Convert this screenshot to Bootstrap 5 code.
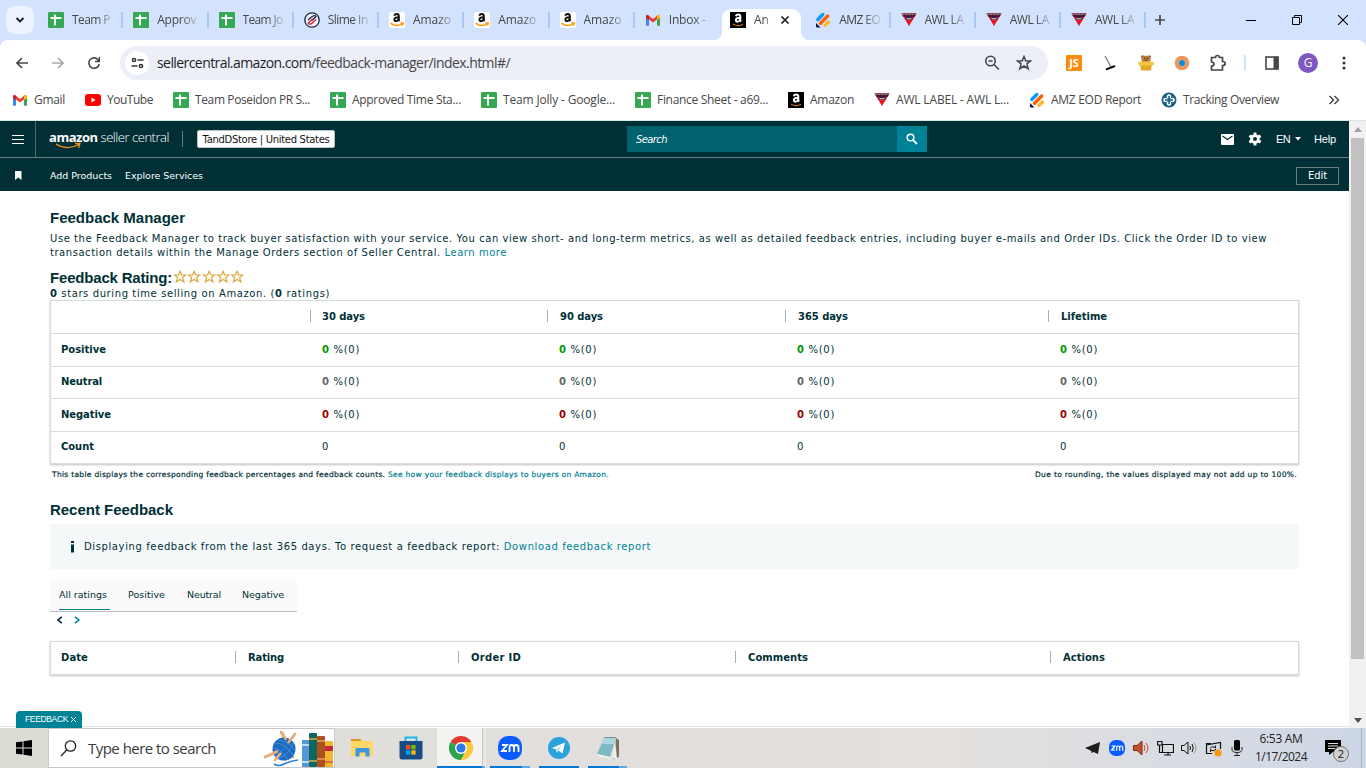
<!DOCTYPE html>
<html lang="en">
<head>
<meta charset="utf-8">
<meta name="viewport" content="width=device-width, initial-scale=1">
<title>Feedback Manager</title>
<link href="https://cdn.jsdelivr.net/npm/bootstrap@5.3.0/dist/css/bootstrap.min.css" rel="stylesheet">
<style>
:root{--ink:#002f36;--teal:#008296;--line:#d5dbdb}
html,body{height:768px;overflow:hidden}
body{font-family:"DejaVu Sans",sans-serif;font-size:10px;line-height:14px;color:var(--ink);background:#fff}
svg{display:block;flex:none}
[data-fit]{white-space:nowrap;display:inline-block;flex:none}
a{text-decoration:none;color:var(--teal)}
.chrome-ui{font-family:"Open Sans",sans-serif;font-size:12px;color:#474747}
.strip{height:40px;background:#d3e3fd}
.tabcell{width:85.25px;height:31px;padding-left:10px;gap:8px;margin-top:9px;flex:none;position:relative}
.tabcell .caption{width:41px;white-space:nowrap;-webkit-mask-image:linear-gradient(90deg,#000 60%,rgba(0,0,0,.15));line-height:20px}
.tabcell.sep::after{content:"";position:absolute;right:0;top:3px;width:2px;height:16px;background:#a8c7fa}
.tabcell.sel{background:#fff;border-radius:9px 9px 0 0;width:79px;margin-left:2px;margin-right:4.25px;padding-left:8px}
.tabcell.sel::before,.tabcell.sel::after{content:"";position:absolute;bottom:0;width:9px;height:9px}
.tabcell.sel::before{left:-9px;background:radial-gradient(circle at 0 0,transparent 9px,#fff 9.5px)}
.tabcell.sel::after{right:-9px;background:radial-gradient(circle at 100% 0,transparent 9px,#fff 9.5px)}
.tabcell.sel .caption{width:18px}
.tabcell > *{margin-bottom:9px}
.tabsearch{width:28px;height:28px;margin:6px 4px 0 6px;border-radius:9px;background:#ecf2fe}
.wc{width:46px;height:40px}
.toolbar{height:46px;background:#fff;border-radius:8px 8px 0 0}
.toolwrap{background:#d3e3fd}
.omni{width:928px;height:34px;border-radius:17px;background:#eceef8;padding-left:5px}
.omni .site{width:24px;height:24px;border-radius:50%;background:#fff;margin-right:8px}
.url{font-size:14px;color:#474747;line-height:20px}
.url b{font-weight:400;color:#1f1f1f}
.cell36{width:36px;flex:none}
.marks{height:35px;padding:0 26px 6px 12px;gap:20px;border-bottom:1px solid #dce8e4}
.marks .bm{gap:6px;flex:none}
.avatar{width:20px;height:20px;border-radius:50%;background:#7e57c2;color:#fff;font-size:12px;line-height:20px}
.viewport{height:607px}
.pagecol{width:1349px;border-bottom:1px solid #fff;position:relative}
.top1{height:37px;background:var(--ink);border-bottom:1px solid #6a7b7d;color:#fff}
.top2{height:33px;background:var(--ink);color:#fff;padding-top:2px}
.menu-btn{width:36px;height:36px;border-right:1px solid #4d6a6e}
.brandbox{position:relative;margin-left:13px;width:120px;font:13px/16px "Open Sans",sans-serif;height:20px}
.brandbox svg{position:absolute;left:6px;top:13px}
.store{width:138px;height:18px;border:1px solid #b8c4c6;border-radius:2px;background:#fff;color:#111;margin-left:10px;padding-top:1px}
.searchbox{width:270px;height:26px;background:#00616f;padding:2px 0 0 9px;font-style:italic}
.searchbtn{width:30px;height:26px;background:var(--teal)}
.lib{font-family:"Liberation Sans",sans-serif}
.editbtn{width:43px;height:18px;border:1px solid #6a7b7d;background:none;color:#fff}
.content{margin-left:50px;width:1249px}
.hd{font:bold 15px/20px "Liberation Sans",sans-serif;margin:0}
.grid-tbl{border:1px solid var(--line);box-shadow:0 1px 2px rgba(0,0,0,.25)}
.grid-row{display:grid;border-top:1px solid var(--line);height:32.5px;align-items:center}
.grid-row:first-child{border-top:0;height:32px}
.rates{grid-template-columns:259px 237px 238px 263px 1fr}
.recent{grid-template-columns:184px 223px 277px 315px 1fr}
.grid-row > div{padding-left:11px;height:12px;line-height:13px;border-left:1px solid transparent;margin-bottom:2px}
.grid-row.headrow > div + div + div{padding-left:12px}
.recent.headrow > div + div{padding-left:12px}
.grid-row > div:first-child{padding-left:9px}
.headrow > div{border-left-color:#a2b0b2;font-weight:bold}
.headrow > div:first-child{border-left-color:transparent}
.pos{color:#090}.neu{color:#666}.neg{color:#900}
.notes{height:20px;font-size:7.5px;padding:2px 2px 0;-webkit-text-stroke:.2px}
.infobox{height:45px;background:#f4f8f9;margin-top:4px;padding-left:19px}
.pills{width:247px;height:33px;background:#fafafa;border-bottom:1px solid #bbb;margin-top:10px;padding-left:9px;position:relative}
.pills span{font-size:9.5px}
.pills::after{content:"";position:absolute;left:9px;bottom:1px;width:51px;height:1px;background:var(--teal)}
.fbtab{position:absolute;left:16px;bottom:-1px;width:66px;height:17px;background:var(--teal);border-radius:4px 4px 0 0;color:#fff;font:8.5px/17px "Liberation Sans",sans-serif;z-index:2}
.pageline{position:absolute;left:0;right:0;bottom:0;height:1px;background:#e4e4e4}
.scroll{width:17px;background:#f1f1f1;padding:6px 2px 5px}
.thumb{height:521px;background:#c1c1c1;width:13px;margin-top:6px}
.taskbar{height:40px;background:linear-gradient(90deg,#dcdcd3,#e1dfdc 35%,#e3e0de 70%,#d3dae5 94%,#cdd6e6);font-family:"Open Sans",sans-serif;color:#222}
.start{width:48px}
.find{width:287px;background:#fff;border:1px solid #c8c8c8;height:40px;font-size:15px;color:#3a3a3a;padding-left:11px}
.app{width:48.9px;height:40px;position:relative}
.app.run::after{content:"";position:absolute;left:4px;right:5px;bottom:0;height:2px;background:#0078d7}
.app.multi::after{background:linear-gradient(90deg,#0078d7 80%,#60a8e2 80%)}
.app.front{background:#f4f3f2;width:45px;margin-right:4px;box-shadow:1px 0 0 #c4c4c4,4px 0 0 #e8e7e6}
.app.front::after{left:0;right:-3px;background:linear-gradient(90deg,#0078d7 94%,#60a8e2 94%)}
.clock{font-size:12px;line-height:18px;width:60px}
.count{position:absolute;left:8px;top:6px;width:16px;height:16px;border-radius:50%;background:#d0d0d0;border:1px solid #777;font-size:11px;line-height:14px;text-align:center;color:#111}
</style>
</head>
<body class="d-flex flex-column">

<!-- Shared icons -->
<svg width="0" height="0" class="position-absolute">
 <defs>
 <symbol id="sheet" viewBox="0 0 16 16"><rect width="16" height="16" rx="1.3" fill="#34a853"/><path d="M2.500 6H13.500M7 2.500V13.500" stroke="#fff" stroke-width="2"/></symbol>
 <symbol id="amzw" viewBox="0 0 16 16"><rect width="16" height="16" rx="2" fill="#fff"/><path d="M5.300 3.700C6 1.500 9.700 1.300 9.800 4V7.300Q9.800 8.300 10.600 9M9.700 5.300C6.500 5.200 5.300 6 5.400 7.700 5.600 10 9 9.400 9.700 7" fill="none" stroke="#111" stroke-width="2"/><path d="M1.500 11.200Q7.500 15.600 13 11.900M11.500 11H14.200L13.600 13.600" fill="none" stroke="#f90" stroke-width="1.500"/></symbol>
 <symbol id="amzb" viewBox="0 0 16 16"><rect width="16" height="16" fill="#000"/><path d="M5.800 4.200C6.500 2 10.200 1.800 10.300 4.500V7.800Q10.300 8.800 11.100 9.500M10.200 5.800C7 5.700 5.800 6.500 5.900 8.200 6.100 10.500 9.500 9.900 10.200 7.500" fill="none" stroke="#fff" stroke-width="2"/><path d="M3 12Q8 15.300 13 12.200" fill="none" stroke="#f0891a" stroke-width="1"/></symbol>
 <symbol id="gmail" viewBox="0 0 16 16"><path d="M1 4V13.500H4V7.500L8 10.500 12 7.500V13.500H15V4L13 3 8 7 3 3Z" fill="#ea4335"/><path d="M1 5V13.500H4V7Z" fill="#4285f4"/><path d="M12 7V13.500H15V5Z" fill="#34a853"/><path d="M12 4L14 2.500 15 4V6L12 8Z" fill="#fbbc04"/><path d="M1 4L2 2.800 4 4V8L1 6Z" fill="#c5221f"/></symbol>
 <symbol id="jot" viewBox="0 0 16 16"><g stroke-linecap="round" stroke-width="3.400"><path d="M2.800 7.500L7.800 2.500" stroke="#0a9bff"/><path d="M5.500 11.200L12.700 4" stroke="#ff6100"/><path d="M10 13.400L13.500 10" stroke="#ffb629"/></g><path d="M1 11V14.500Q1 15.500 2 15.500H5.500Z" fill="#0a1551"/></symbol>
 <symbol id="awl" viewBox="0 0 16 16"><path d="M.5 1.500H15.500L8 14Z" fill="#e8131d"/><path d="M.5 1.500H15.500L13.500 5H2.500Z" fill="#3a1c44"/><path d="M1.500 2.500H14.500" stroke="#c68a57" stroke-width="1.200" stroke-dasharray="2 1"/><path d="M4 6L8 4.800 12 6 10.800 8H5.200Z" fill="#2a1c3c"/><path d="M5.500 6.800H10.500" stroke="#f4c7d0" stroke-width="1.200"/></symbol>
 <symbol id="track" viewBox="0 0 16 16"><circle cx="8" cy="8" r="7.500" fill="#1b5e8c"/><g fill="#fff"><circle cx="8" cy="4.500" r="2.300"/><circle cx="8" cy="11.500" r="2.300"/><circle cx="4.500" cy="8" r="2.300"/><circle cx="11.500" cy="8" r="2.300"/></g><path d="M8 4V12M4 8H12" stroke="#1b5e8c" stroke-width="1.600"/></symbol>
 <symbol id="slime" viewBox="0 0 16 16"><circle cx="8" cy="8" r="7.200" fill="#f4f6fb" stroke="#152445" stroke-width="1.300"/><path d="M4 8L8.500 4.200Q11 3 12 4.800L7.500 8.800" fill="none" stroke="#152445" stroke-width="1.200"/><path d="M12 7.500L8 11.300Q5 13 4.300 11L9 6.700" fill="none" stroke="#d3243c" stroke-width="1.400"/></symbol>
 <symbol id="zm" viewBox="0 0 24 24"><rect width="24" height="24" rx="10" fill="#0b5cff"/><path d="M4 9H9L4 15H9M11.500 16V11.500Q11.500 9 13.700 9T16 11.500V16M16 11.500Q16 9 18.200 9T20.500 11.500V16" fill="none" stroke="#fff" stroke-width="1.800"/></symbol>
 <symbol id="star5" viewBox="0 0 14 14"><path d="M7 1.300L8.600 5H12.600L9.500 7.600 10.800 11.900 7 9.500 3.200 11.900 4.500 7.600 1.400 5H5.400Z" fill="#fff8e8" stroke="#d9a845" stroke-width="1.200"/></symbol>
 </defs>
</svg>

<div class="chrome-ui">
 <div class="strip d-flex">
  <div class="tabsearch d-flex align-items-center justify-content-center flex-shrink-0"><svg width="10" height="8" viewBox="0 0 10 8"><path d="M1.500 2L5 5.500 8.500 2" fill="none" stroke="#1f1f1f" stroke-width="1.800"/></svg></div>
  <div class="tabcell sep d-flex align-items-center"><svg width="16" height="16"><use href="#sheet"/></svg><div class="caption" data-fit="38">Team P</div></div>
  <div class="tabcell sep d-flex align-items-center"><svg width="16" height="16"><use href="#sheet"/></svg><div class="caption" data-fit="39">Approv</div></div>
  <div class="tabcell sep d-flex align-items-center"><svg width="16" height="16"><use href="#sheet"/></svg><div class="caption" data-fit="40">Team Jo</div></div>
  <div class="tabcell sep d-flex align-items-center"><svg width="16" height="16"><use href="#slime"/></svg><div class="caption" data-fit="40">Slime In</div></div>
  <div class="tabcell sep d-flex align-items-center"><svg width="16" height="16"><use href="#amzw"/></svg><div class="caption" data-fit="38">Amazo</div></div>
  <div class="tabcell sep d-flex align-items-center"><svg width="16" height="16"><use href="#amzw"/></svg><div class="caption" data-fit="38">Amazo</div></div>
  <div class="tabcell sep d-flex align-items-center"><svg width="16" height="16"><use href="#amzw"/></svg><div class="caption" data-fit="38">Amazo</div></div>
  <div class="tabcell d-flex align-items-center"><svg width="16" height="16"><use href="#gmail"/></svg><div class="caption" data-fit="37">Inbox -</div></div>
  <div class="tabcell sel d-flex align-items-center"><svg width="16" height="16"><use href="#amzb"/></svg><div class="caption" data-fit="15">An</div><svg width="10" height="10" viewBox="0 0 10 10"><path d="M1.500 1.500L8.500 8.500M8.500 1.500L1.500 8.500" stroke="#1f1f1f" stroke-width="1.700"/></svg></div>
  <div class="tabcell sep d-flex align-items-center"><svg width="16" height="16"><use href="#jot"/></svg><div class="caption" data-fit="41">AMZ EO</div></div>
  <div class="tabcell sep d-flex align-items-center"><svg width="16" height="16"><use href="#awl"/></svg><div class="caption" data-fit="39">AWL LA</div></div>
  <div class="tabcell sep d-flex align-items-center"><svg width="16" height="16"><use href="#awl"/></svg><div class="caption" data-fit="39">AWL LA</div></div>
  <div class="tabcell sep d-flex align-items-center"><svg width="16" height="16"><use href="#awl"/></svg><div class="caption" data-fit="39">AWL LA</div></div>
  <div class="d-flex align-items-center ps-2 ms-0"><svg width="12" height="12" viewBox="0 0 12 12"><path d="M6 1V11M1 6H11" stroke="#474747" stroke-width="1.700"/></svg></div>
  <div class="d-flex ms-auto">
   <div class="wc d-flex align-items-center justify-content-center"><svg width="10" height="10"><path d="M0 5.500H10" stroke="#000"/></svg></div>
   <div class="wc d-flex align-items-center justify-content-center"><svg width="10" height="10"><path d="M.5 2.500H7.500V9.500H.5ZM2.500 2.500V.5H9.500V7.500H7.500" fill="none" stroke="#000"/></svg></div>
   <div class="wc d-flex align-items-center justify-content-center"><svg width="10" height="10"><path d="M0 0L10 10M10 0L0 10" stroke="#000" stroke-width="1.100"/></svg></div>
  </div>
 </div>

 <div class="toolwrap"><div class="toolbar d-flex align-items-center">
  <div class="d-flex align-items-center" style="width:120px">
   <svg class="ms-3" width="12" height="12" viewBox="0 0 12 12"><path d="M12 6H1M6 1L1 6L6 11" fill="none" stroke="#474747" stroke-width="1.600"/></svg>
   <svg class="ms-4" width="12" height="12" viewBox="0 0 12 12"><path d="M0 6H11M6 1L11 6L6 11" fill="none" stroke="#aaa" stroke-width="1.600"/></svg>
   <svg class="ms-4" width="12" height="12" viewBox="0 0 12 12"><path d="M10.600 3.500A5.200 5.200 0 1 0 11.200 7M11.500 0V4.500H7" fill="none" stroke="#474747" stroke-width="1.600"/></svg>
  </div>
  <div class="omni d-flex align-items-center">
   <div class="site d-flex align-items-center justify-content-center"><svg width="13" height="12" viewBox="0 0 13 12"><g fill="none" stroke="#333" stroke-width="1.500"><circle cx="3" cy="3" r="1.600"/><path d="M6.500 3H12.500M.5 9H6.500"/><circle cx="10" cy="9" r="1.600"/></g></svg></div>
   <span class="url" data-fit="353"><b>sellercentral.amazon.com</b>/feedback-manager/index.html#/</span>
   <svg class="ms-auto" width="16" height="16" viewBox="0 0 16 16"><g fill="none" stroke="#474747" stroke-width="1.600"><circle cx="6.500" cy="6" r="4.700"/><path d="M4.500 6H8.500M10 9.500L15 14.500"/></g></svg>
   <svg class="ms-3 me-3" width="16" height="16" viewBox="0 0 16 16"><path d="M8 1.500L9.800 6H14.500L10.900 8.900 12.200 13.700 8 11 3.800 13.700 5.100 8.900 1.500 6H6.200Z" fill="none" stroke="#474747" stroke-width="1.500"/></svg>
  </div>
  <div class="d-flex align-items-center ms-2">
   <div class="cell36 d-flex justify-content-center"><svg width="16" height="16"><rect width="16" height="16" rx="1" fill="#ff8a0d"/><text x="8" y="12" text-anchor="middle" font-family="Open Sans,sans-serif" font-weight="700" font-size="11" fill="#fff">JS</text></svg></div>
   <div class="cell36 d-flex justify-content-center"><svg width="16" height="16"><path d="M3 1L9 12" stroke="#777" stroke-width="1.200"/><path d="M4 14.500L13 11" stroke="#111" stroke-width="2"/></svg></div>
   <div class="cell36 d-flex justify-content-center"><svg width="16" height="16"><circle cx="4.500" cy="1.800" r="1.500" fill="#8a5424"/><circle cx="11.500" cy="1.800" r="1.500" fill="#8a5424"/><rect x="3.500" y=".8" width="9" height="7" rx="3" fill="#b97a3d"/><path d="M6 3.500H7M9 3.500H10M7.300 5.300H8.700" stroke="#3d1e08"/><path d="M2 8H14L13 15.500H3Z" fill="#e4a82a"/><rect y="6.500" width="16" height="4" rx="2" fill="#f4c542"/></svg></div>
   <div class="cell36 d-flex justify-content-center"><svg width="16" height="16"><circle cx="8" cy="8" r="5.300" fill="#a8d8ef" stroke="#f0965a" stroke-width="4"/><circle cx="8" cy="8" r="3" fill="#0a8ddc"/></svg></div>
   <div class="cell36 d-flex justify-content-center"><svg width="18" height="18" viewBox="0 0 18 18"><path d="M2.500 3.500H6.500Q6.500 1.500 8.500 1.500T10.500 3.500H13.500V7.500Q16.200 7.500 16.200 9.500T13.500 11.500V16H2.500V12Q5 12 5 10T2.500 8Z" fill="none" stroke="#474747" stroke-width="1.700"/></svg></div>
   <div style="width:18px" class="d-flex justify-content-center"><svg width="2" height="16"><rect width="2" height="16" fill="#d3e3fd"/></svg></div>
   <div class="cell36 d-flex justify-content-center"><svg width="14" height="14"><rect x="1" y="1" width="12" height="12" fill="none" stroke="#474747" stroke-width="1.600"/><rect x="8.500" y="1" width="5" height="12" fill="#474747"/></svg></div>
   <div class="cell36 d-flex justify-content-center"><div class="avatar text-center">G</div></div>
   <div class="cell36 d-flex justify-content-center"><svg width="4" height="14"><g fill="#333"><circle cx="2" cy="2" r="1.500"/><circle cx="2" cy="7" r="1.500"/><circle cx="2" cy="12" r="1.500"/></g></svg></div>
  </div>
 </div></div>

 <div class="marks d-flex align-items-center">
  <div class="bm d-flex align-items-center"><svg width="16" height="16"><use href="#gmail"/></svg><span data-fit="31">Gmail</span></div>
  <div class="bm d-flex align-items-center"><svg width="16" height="16"><rect y="2" width="16" height="12" rx="3" fill="#f00"/><path d="M6.500 5.500V10.500L10.500 8Z" fill="#fff"/></svg><span data-fit="46">YouTube</span></div>
  <div class="bm d-flex align-items-center"><svg width="16" height="16"><use href="#sheet"/></svg><span data-fit="115">Team Poseidon PR S...</span></div>
  <div class="bm d-flex align-items-center"><svg width="16" height="16"><use href="#sheet"/></svg><span data-fit="109">Approved Time Sta...</span></div>
  <div class="bm d-flex align-items-center"><svg width="16" height="16"><use href="#sheet"/></svg><span data-fit="112">Team Jolly - Google...</span></div>
  <div class="bm d-flex align-items-center"><svg width="16" height="16"><use href="#sheet"/></svg><span data-fit="111">Finance Sheet - a69...</span></div>
  <div class="bm d-flex align-items-center"><svg width="16" height="16"><use href="#amzb"/></svg><span data-fit="44">Amazon</span></div>
  <div class="bm d-flex align-items-center"><svg width="16" height="16"><use href="#awl"/></svg><span data-fit="113">AWL LABEL - AWL L...</span></div>
  <div class="bm d-flex align-items-center"><svg width="16" height="16"><use href="#jot"/></svg><span data-fit="90">AMZ EOD Report</span></div>
  <div class="bm d-flex align-items-center"><svg width="16" height="16"><use href="#track"/></svg><span data-fit="96">Tracking Overview</span></div>
  <svg class="ms-auto" width="12" height="10" viewBox="0 0 12 10"><path d="M1.500 1L5.500 5 1.500 9M6.500 1L10.500 5 6.500 9" fill="none" stroke="#474747" stroke-width="1.500"/></svg>
 </div>
</div>

<div class="viewport d-flex">
 <div class="pagecol">
  <header>
   <div class="top1 d-flex align-items-center">
    <div class="menu-btn d-flex align-items-center justify-content-center"><svg width="12" height="10"><path d="M0 1.500H12M0 5.500H12M0 9.500H12" stroke="#fff"/></svg></div>
    <div class="brandbox"><span data-fit="120"><b>amazon</b> <span class="fw-light">seller central</span></span>
     <svg width="27" height="8"><path d="M1 2Q12 9 24 2.500M20 1.500H25L23.500 6" fill="none" stroke="#f0901e" stroke-width="1.300"/></svg></div>
    <svg class="ms-2 me-1 ps-1" width="6" height="16"><path d="M1.500 0V16" stroke="#6a7b7d"/></svg>
    <div class="store d-flex align-items-center justify-content-center"><span data-fit="127">TandDStore | United States</span></div>
    <div class="d-flex" style="margin-left:292px">
     <div class="searchbox d-flex align-items-center"><span data-fit="31">Search</span></div>
     <div class="searchbtn d-flex align-items-center justify-content-center"><svg width="12" height="12"><circle cx="4.500" cy="4.500" r="3.300" fill="none" stroke="#fff" stroke-width="1.500"/><path d="M7 7L11 11" stroke="#fff" stroke-width="1.800"/></svg></div>
    </div>
    <div class="d-flex align-items-center ms-auto lib" style="padding-right:13px">
     <svg width="13" height="11"><rect width="13" height="11" rx="1" fill="#fff"/><path d="M1.500 2L6.500 5.500 11.500 2" fill="none" stroke="#002f36" stroke-width="1.100"/></svg>
     <svg style="margin-left:14px" width="14" height="14" viewBox="0 0 14 14"><circle cx="7" cy="7" r="3.400" fill="none" stroke="#fff" stroke-width="2.800"/><path d="M7 .5V3M7 11V13.500M1.400 3.700L3.500 5M10.500 9L12.600 10.300M12.600 3.700L10.500 5M3.500 9L1.400 10.300" stroke="#fff" stroke-width="2.800"/></svg>
     <span style="margin:0 5px 0 14px;font-size:11px" data-fit="14">EN</span>
     <svg width="6" height="4"><path d="M0 0H6L3 3.500Z" fill="#fff"/></svg>
     <span style="margin-left:13px;font-size:11px" data-fit="22">Help</span>
    </div>
   </div>
   <div class="top2 d-flex align-items-center">
    <svg style="margin:0 28px 0 15px" width="7" height="9"><path d="M0 0H6.500V9L3.250 6.500 0 9Z" fill="#fff"/></svg>
    <span style="margin-right:13px;font-size:9.5px" data-fit="62">Add Products</span>
    <span style="font-size:9.5px" data-fit="78">Explore Services</span>
    <button class="editbtn ms-auto p-0 d-flex align-items-center justify-content-center" style="margin-right:10px"><span data-fit="19">Edit</span></button>
   </div>
  </header>

  <main class="content">
   <h1 class="hd" style="padding-top:17px;height:41px"><span data-fit="135">Feedback Manager</span></h1>
   <div><span class="d-block" data-fit="1217">Use the Feedback Manager to track buyer satisfaction with your service. You can view short- and long-term metrics, as well as detailed feedback entries, including buyer e-mails and Order IDs. Click the Order ID to view</span></div>
   <div><span data-fit="457">transaction details within the Manage Orders section of Seller Central. <a href="#">Learn more</a></span></div>
   <div class="d-flex align-items-center" style="margin-top:8px;height:19px">
    <h2 class="hd"><span data-fit="122">Feedback Rating:</span></h2>
    <div class="d-flex" style="margin:0 0 1px 1px">
     <svg width="14.300" height="14"><use href="#star5"/></svg><svg width="14.300" height="14"><use href="#star5"/></svg><svg width="14.300" height="14"><use href="#star5"/></svg><svg width="14.300" height="14"><use href="#star5"/></svg><svg width="14.300" height="14"><use href="#star5"/></svg>
    </div>
   </div>
   <div style="height:13px;line-height:13px"><span data-fit="280"><b>0</b> stars during time selling on Amazon. (<b>0</b> ratings)</span></div>

   <section class="grid-tbl">
    <div class="grid-row rates headrow"><div></div><div><span data-fit="43">30 days</span></div><div><span data-fit="43">90 days</span></div><div><span data-fit="50">365 days</span></div><div><span data-fit="46">Lifetime</span></div></div>
    <div class="grid-row rates"><div><b data-fit="45">Positive</b></div><div><span data-fit="38"><b class="pos">0</b> %(0)</span></div><div><span data-fit="38"><b class="pos">0</b> %(0)</span></div><div><span data-fit="38"><b class="pos">0</b> %(0)</span></div><div><span data-fit="38"><b class="pos">0</b> %(0)</span></div></div>
    <div class="grid-row rates"><div><b data-fit="41">Neutral</b></div><div><span data-fit="38"><b class="neu">0</b> %(0)</span></div><div><span data-fit="38"><b class="neu">0</b> %(0)</span></div><div><span data-fit="38"><b class="neu">0</b> %(0)</span></div><div><span data-fit="38"><b class="neu">0</b> %(0)</span></div></div>
    <div class="grid-row rates"><div><b data-fit="50">Negative</b></div><div><span data-fit="38"><b class="neg">0</b> %(0)</span></div><div><span data-fit="38"><b class="neg">0</b> %(0)</span></div><div><span data-fit="38"><b class="neg">0</b> %(0)</span></div><div><span data-fit="38"><b class="neg">0</b> %(0)</span></div></div>
    <div class="grid-row rates"><div><b data-fit="33">Count</b></div><div>0</div><div>0</div><div>0</div><div>0</div></div>
   </section>
   <div class="notes d-flex align-items-center justify-content-between">
    <span data-fit="557">This table displays the corresponding feedback percentages and feedback counts. <a href="#">See how your feedback displays to buyers on Amazon.</a></span>
    <span data-fit="262">Due to rounding, the values displayed may not add up to 100%.</span>
   </div>

   <h2 class="hd" style="margin-top:16px"><span data-fit="123">Recent Feedback</span></h2>
   <div class="infobox d-flex align-items-center">
    <svg width="6" height="12"><path d="M2 0H5V2H2ZM2 3.500H5V11.500H2Z" fill="#002f36"/></svg>
    <span style="margin-left:9px" data-fit="567">Displaying feedback from the last 365 days. To request a feedback report: <a href="#">Download feedback report</a></span>
   </div>
   <nav class="pills d-flex align-items-center">
    <span style="margin-right:21px" data-fit="48">All ratings</span><span style="margin-right:22px" data-fit="37">Positive</span><span style="margin-right:21px" data-fit="34">Neutral</span><span data-fit="42">Negative</span>
   </nav>
   <div class="d-flex align-items-center" style="height:16px;padding-left:7px">
    <svg width="6" height="8"><path d="M4.800 .8L1 4 4.800 7.200" fill="none" stroke="#002f36" stroke-width="1.600"/></svg>
    <svg style="margin-left:10px" width="7" height="8"><path d="M2 .8L5.800 4 2 7.200" fill="none" stroke="#008296" stroke-width="1.600"/></svg>
   </div>
   <section class="grid-tbl" style="margin-top:13px;height:34px">
    <div class="grid-row recent headrow"><div><span data-fit="27">Date</span></div><div><span data-fit="36">Rating</span></div><div><span data-fit="50">Order ID</span></div><div><span data-fit="60">Comments</span></div><div><span data-fit="42">Actions</span></div></div>
   </section>
  </main>
  <div class="pageline"></div>
  <div class="fbtab d-flex align-items-center ps-2"><span style="margin:0 2px 0 1px" data-fit="43">FEEDBACK</span><svg width="7" height="7"><path d="M1 1L6 6M6 1L1 6" stroke="#fff"/></svg></div>
 </div>
 <div class="scroll d-flex flex-column align-items-center">
  <svg width="8" height="5"><path d="M0 5L4 0 8 5Z" fill="#a3a3a3"/></svg>
  <div class="thumb"></div>
  <svg class="mt-auto" width="8" height="5"><path d="M0 0H8L4 5Z" fill="#505050"/></svg>
 </div>
</div>

<footer class="taskbar d-flex">
 <div class="start d-flex align-items-center justify-content-center"><svg width="16" height="16"><path d="M0 2.300L6.500 1.400V7.500H0ZM7.500 1.200L16 0V7.500H7.500ZM0 8.500H6.500V14.600L0 13.700ZM7.500 8.500H16V16L7.500 14.800Z" fill="#000"/></svg></div>
 <div class="find d-flex align-items-center">
  <svg width="17" height="17"><circle cx="10.500" cy="6" r="5.200" fill="none" stroke="#222" stroke-width="1.300"/><path d="M6.700 10L1 16" stroke="#222" stroke-width="1.300"/></svg>
  <span style="margin-left:11px" data-fit="128">Type here to search</span>
  <svg class="ms-auto" width="70" height="38" viewBox="0 0 70 38"><g stroke="#e2a56d" stroke-width="2.500" stroke-linecap="round"><path d="M17 3L29 28M31 5L11 31M30 16L1 28"/></g><circle cx="20" cy="20" r="11.500" fill="#1e6ac0"/><path d="M11 14Q21 14 29 26M14 11Q24 12 31 21M9 19Q17 19 24 31M10 27Q22 22 25 10M13 30Q26 25 29 14" fill="none" stroke="#3f8cdc" stroke-width="1"/><path d="M22 11L18 3M24 14L31 5M14 22L1 28M17 24L11 31" stroke="#e9b07b" stroke-width="2.500"/><path d="M10 35Q14 38 20 35T34 31" fill="none" stroke="#2f7fd8" stroke-width="1.600"/><rect x="38" y="11" width="7" height="27" fill="#5796d8"/><path d="M38 16H45M38 33H45" stroke="#b6dcf5" stroke-width="2"/><rect x="45" y="4" width="8" height="34" rx="1" fill="#0d6660"/><path d="M45 10H53M45 32H53" stroke="#d4b153" stroke-width="1.500"/><rect x="53" y="7" width="8" height="31" rx="1" fill="#b04f1c"/><path d="M53 12H61M53 30H61" stroke="#e6a75d" stroke-width="1.500"/><rect x="61" y="12" width="8" height="26" rx="1" fill="#efb62e"/><path d="M61 19.500H69" stroke="#c5283d" stroke-width="5"/><path d="M61 33H69" stroke="#c5283d"/></svg>
 </div>
 <div class="d-flex" style="margin-left:3px">
  <div class="app d-flex align-items-center justify-content-center"><svg width="22" height="20"><path d="M0 2Q0 1 1 1H9L11 3H21Q22 3 22 4V18H0Z" fill="#ffd667"/><path d="M0 1H9L11 3H0Z" fill="#d99a16"/><path d="M4.500 20V11Q4.500 10 6 10H17Q18.500 10 18.500 11V18.500H14.500V14.500H8.500V18.500H4.500Z" fill="#3d97db"/></svg></div>
  <div class="app d-flex align-items-center justify-content-center"><svg width="24" height="24"><path d="M6.500 5V1.500H17.500V5" fill="none" stroke="#1fb7ee" stroke-width="2"/><path d="M.5 5H23.500V21Q23.500 23.500 21 23.500H3Q.5 23.500 .5 21Z" fill="#174b83"/><path fill="#f25022" d="M7 9h4.300v4.300H7z"/><path fill="#7fba00" d="M12.300 9h4.300v4.300h-4.300z"/><path fill="#00a4ef" d="M7 14.300h4.300v4.300H7z"/><path fill="#ffb900" d="M12.300 14.300h4.300v4.300h-4.300z"/></svg></div>
  <div class="app front run d-flex align-items-center justify-content-center" style="margin-left:1px"><svg class="ms-1" width="24" height="24" viewBox="-12 -12 24 24"><path d="M0 0L-10.400 -6A12 12 0 0 1 10.400 -6Z" fill="#e33b2e"/><path d="M0 0L-10.400 -6A12 12 0 0 0 0 12L5 3Z" fill="#2da44e"/><path d="M0 0V-6H10.400A12 12 0 0 1 0 12L5 3Z" fill="#fcc934"/><circle r="6" fill="#fff"/><circle r="4.600" fill="#2f78ee"/></svg></div>
  <div class="app run multi d-flex align-items-center justify-content-center"><svg width="24" height="24"><use href="#zm"/></svg></div>
  <div class="app run d-flex align-items-center justify-content-center"><svg width="22" height="22"><circle cx="11" cy="11" r="11" fill="#2aa3dc"/><path d="M4 11L17 5.500 14.500 16.500 10.500 13.500 8.500 15.500 8 12.500Z" fill="#fff"/><path d="M8 12.500L14.500 8 10.500 13.500 8.500 15.500Z" fill="#b9dcee"/></svg></div>
  <div class="app run multi d-flex align-items-center justify-content-center"><svg width="24" height="24"><path d="M20 2L23 4V21L17 23Z" fill="#7b715f"/><path d="M19 3L21 23 16 22Z" fill="#eee"/><path d="M8 2L20 2 14 21 1 18Z" fill="#7fb9c4"/><path d="M8 2L20 2 18 8 5 8Z" fill="#a9d8df"/><path d="M8 1.500H20" stroke="#888"/><path d="M1 18L14 21 15 23 2 20Z" fill="#eef3f4"/></svg></div>
 </div>
 <div class="d-flex align-items-center ms-auto">
  <svg width="16" height="16"><path d="M0 8L15 2 13 14Z" fill="#1c1c1c"/><path d="M7 9L6 13 10 11.500Z" fill="#1c1c1c"/></svg>
  <svg class="ms-2" width="16" height="16"><use href="#zm"/></svg>
  <svg class="ms-2" width="16" height="16"><path d="M.5 5.500H4L9 1V15L4 10.500H.5Z" fill="#c8502e" stroke="#7c2a16"/><path d="M11 5Q13 8 11 11M13 3Q17 8 13 13" fill="none" stroke="#c8502e"/></svg>
  <svg class="ms-2" width="17" height="16"><path d="M5.500 4.500H16.500V12.500H5.500M11 12.500V15M7 15H14M.5 1.500H5V5H.5ZM2.500 5V12.500H5.500V4" fill="none" stroke="#111" stroke-width="1.200"/></svg>
  <svg style="margin-left:7px" width="16" height="16"><path d="M.5 5.500H3L7 2V14L3 10.500H.5Z" fill="none" stroke="#111"/><path d="M9 6Q10 8 9 10M11 4Q13.500 8 11 12" fill="none" stroke="#111"/><path d="M13 2.500Q17 8 13 13.500" fill="none" stroke="#999"/></svg>
  <svg class="ms-2" width="17" height="17"><path d="M7 13.500H1.500V5L15.500 2.500V9M1.500 5V3.500H6" fill="none" stroke="#111" stroke-width="1.200"/><path d="M5 8.500Q6 6 9 7L10.500 8V5.500M11 9Q9.500 11.500 7 10.500L5.500 9.500V12" fill="none" stroke="#111"/><circle cx="13" cy="13" r="3.500" fill="#ff9800"/></svg>
  <svg style="margin-left:9px" width="12" height="16"><rect x="3" width="6" height="10.500" rx="1.500" fill="#000"/><path d="M1 7V9.500Q1 12.500 6 12.500T11 9.500V7M6 12.500V15.500M3 15.500H9" fill="none" stroke="#222"/></svg>
  <div class="clock text-center" style="margin-left:8px"><div><span data-fit="43">6:53 AM</span></div><div><span data-fit="52">1/17/2024</span></div></div>
  <div class="position-relative" style="margin:0 19px 0 14px"><svg width="17" height="16"><path d="M0 0H16V12H8L4 15V12H0Z" fill="#000"/><path d="M3 3.500H13M3 6H13M3 8.500H10" stroke="#ddd"/></svg><div class="count">2</div></div>
  <div style="width:5px;height:40px;border-left:1px solid #aeb4be"></div>
 </div>
</footer>

<script src="https://cdn.jsdelivr.net/npm/bootstrap@5.3.0/dist/js/bootstrap.bundle.min.js"></script>
<script>
// Track each label out to its set width
document.querySelectorAll('[data-fit]').forEach(function(el){
  var r=document.createRange();r.selectNodeContents(el);
  var w=r.getBoundingClientRect().width,t=+el.dataset.fit;
  el.style.letterSpacing=((t-w)/el.textContent.trim().length).toFixed(3)+'px';
});
</script>
</body>
</html>
